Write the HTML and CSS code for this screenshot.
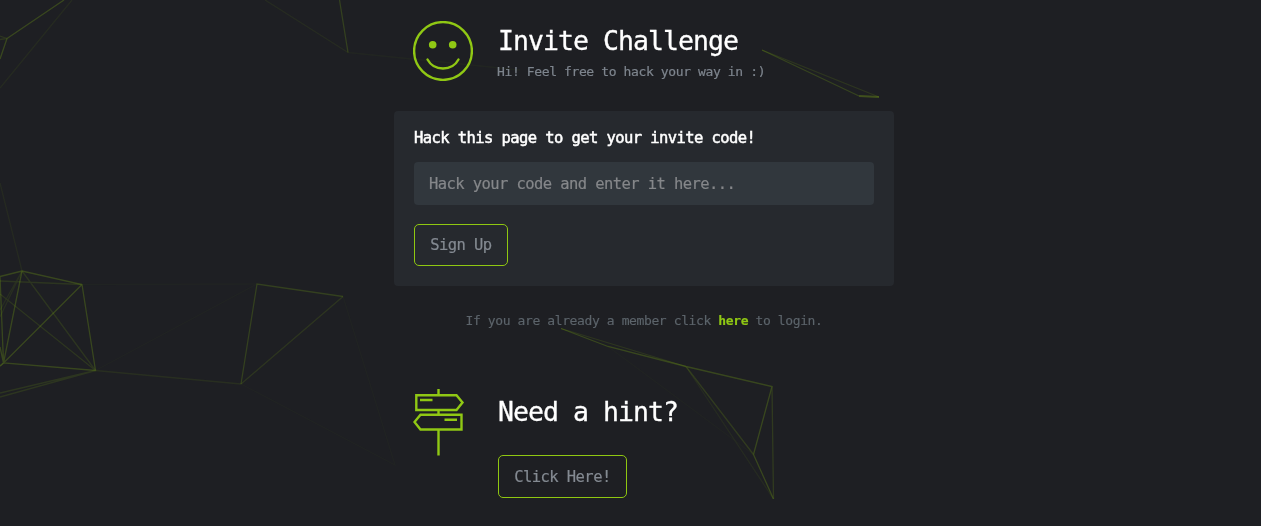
FILE: index.html
```html
<!DOCTYPE html>
<html lang="en">
<head>
<meta charset="utf-8">
<title>Invite Challenge</title>
<link rel="stylesheet" href="styles.css">
</head>
<body>
<svg class="network" viewBox="0 0 1261 526" aria-hidden="true">
  <g class="strong">
    <path d="M7 38.500L64 0M7 38.500L0 59" opacity=".8"/>
    <path d="M0 276.500L22 271L82 284.500L95.500 370.500L3.500 363ZM22 271L3.500 363L82 284.500M0 366L3.500 363L0 347" opacity=".8"/>
    <path d="M0 366L3.500 363"/>
    <path d="M339.500 0L348 52.500M241 384L257 284L343 296.500" opacity=".65"/>
    <path d="M859 96L879 97" stroke-width="2"/>
    <path d="M762 50L859 96" opacity=".7"/>
    <path d="M561 328.500L608 346.500L686 366.500L772 386.500L753.500 454.500L773.500 499" opacity=".8"/>
    <path d="M686 366.500L753.500 454.500M772 386.500L773.500 499" opacity=".55"/>
  </g>
  <g class="medium">
    <path d="M0 281L82 284.500M22 271L95.500 370.500M0 397L95.500 370.500M0 294L95.500 370.500M0 393L95.500 370.500M241 384L343 296.500M762 50L879 97M561 328.500L686 366.500M0 36L7 38.500L0 39.500"/>
    <path d="M22 271L0 317M22 271L0 310M95.500 370.500L241 384" opacity=".7"/>
  </g>
  <g class="faint">
    <path d="M0 88L72 0M0 183L22 271M265 0L348 52.500M686 366.500L773.500 499"/>
    <path d="M348 52.500L520 70" opacity=".55"/>
    <path d="M82 284.500L257 284M95.500 370.500L257 284M241 384L395 465L343 296.500M608 346.500L753.500 454.500" opacity=".35"/>
  </g>
</svg>

<main class="page">
  <header class="intro">
    <svg class="icon smile" viewBox="0 0 60 60" aria-hidden="true">
      <circle cx="30" cy="30" r="28.900"/>
      <path d="M14.500 38.500C21 50.500 39 50.500 45.500 38.500"/>
      <circle class="eye" cx="19.700" cy="23.800" r="3.800"/>
      <circle class="eye" cx="39.700" cy="23.800" r="3.800"/>
    </svg>
    <div>
      <h1 class="title">Invite Challenge</h1>
      <p class="subtitle">Hi! Feel free to hack your way in :)</p>
    </div>
  </header>

  <form class="panel">
    <label class="label" for="code">Hack this page to get your invite code!</label>
    <input class="field" id="code" type="text" placeholder="Hack your code and enter it here...">
    <button class="button signup" type="button">Sign Up</button>
  </form>

  <p class="member">If you are already a member click <a class="link" href="#">here</a> to login.</p>

  <section class="hint">
    <svg class="icon signpost" viewBox="0 0 52 67" aria-hidden="true">
      <path d="M25.500 0V6M25.500 21V26M25.500 41V66.500M3.300 6.300H43.500L49.500 13.500L43.500 21H3.300ZM48.500 25.700H7.500L1.500 33L7.500 40.500H48.500ZM7 11H19.500M31.500 30.700H44"/>
    </svg>
    <div>
      <h2 class="title">Need a hint?</h2>
      <button class="button" type="button">Click Here!</button>
    </div>
  </section>
</main>
</body>
</html>
```
FILE: styles.css
```css
* { box-sizing: border-box; }

body {
  margin: 0;
  height: 526px;
  overflow: hidden;
  background: #1e1f23;
  color: #7e858e;
  font-family: "DejaVu Sans Mono", monospace;
}

/* Decorative particle mesh behind the content */
.network {
  position: absolute;
  inset: 0;
  width: 1261px;
  height: 526px;
  z-index: -1;
  fill: none;
  stroke: #8fc711;
  stroke-width: 1.3;
}
.strong { opacity: .3; }
.medium { opacity: .13; }
.faint { opacity: .07; }

.page { width: 500px; margin-left: 394px; }

.intro {
  display: flex;
  height: 111px;
  padding: 21px 0 0 19px;
  gap: 25px;
}
.icon {
  flex: none;
  fill: none;
  stroke: #90c814;
  stroke-width: 2.4;
}
.smile { width: 60px; height: 60px; stroke-linecap: round; }
.eye { fill: #90c814; stroke: none; }
.title {
  margin: 0;
  color: #fff;
  font-size: 26.500px;
  font-weight: 400;
  letter-spacing: -.96px;
  line-height: 40px;
  -webkit-text-stroke: .3px #fff;
  white-space: nowrap;
}
.subtitle {
  margin: 1px 0 0 -1px;
  font-size: 13px;
  letter-spacing: -.38px;
  line-height: 20px;
  -webkit-text-stroke: .2px currentColor;
}

.panel {
  display: flex;
  flex-direction: column;
  align-items: flex-start;
  height: 175px;
  padding: 15px 20px 20px;
  border-radius: 4px;
  background: #26292e;
}
.label {
  color: #fff;
  font-size: 15.500px;
  letter-spacing: -.58px;
  line-height: 24px;
  -webkit-text-stroke: .5px #fff;
}
.field {
  width: 460px;
  height: 43px;
  margin-top: 12px;
  padding: 1px 14px 0 15px;
  border: 0;
  border-radius: 4px;
  background: #31373d;
  font: 15.500px "DejaVu Sans Mono", monospace;
  letter-spacing: -.58px;
}
.field::placeholder {
  color: #85878a;
  opacity: 1;
  -webkit-text-stroke: .2px currentColor;
}
.button {
  display: block;
  width: 129px;
  height: 43px;
  padding: 0;
  border: 1px solid #8fc711;
  border-radius: 5px;
  background: transparent;
  color: #848a92;
  font: 15.500px "DejaVu Sans Mono", monospace;
  letter-spacing: -.58px;
  -webkit-text-stroke: .2px currentColor;
}
.signup { width: 94px; height: 42px; margin-top: 19px; }

.member {
  margin: 25px 0 0;
  color: #5c646b;
  font-size: 13px;
  letter-spacing: -.39px;
  line-height: 20px;
  text-align: center;
  -webkit-text-stroke: .15px currentColor;
}
.link {
  color: #90c814;
  text-decoration: none;
  font-weight: 700;
}

.hint {
  display: flex;
  gap: 33px;
  padding: 58px 0 0 19px;
}
.signpost { width: 52px; height: 67px; }
.hint .title { height: 66px; padding-top: 3px; }
```
